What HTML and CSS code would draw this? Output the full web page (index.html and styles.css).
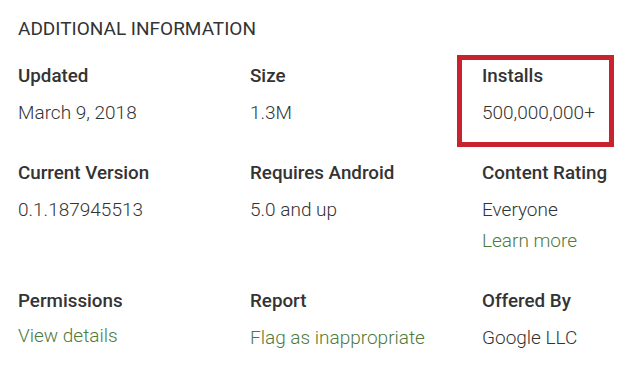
FILE: index.html
```html
<!DOCTYPE html>
<html>
<head>
<meta charset="utf-8">
<link rel="stylesheet" href="styles.css">
</head>
<body>
<div class="page">
  <h2 class="title">ADDITIONAL INFORMATION</h2>
  <div class="grid">
    <div class="cell">
      <div class="label">Updated</div>
      <div class="value">March 9, 2018</div>
    </div>
    <div class="cell">
      <div class="label">Size</div>
      <div class="value">1.3M</div>
    </div>
    <div class="cell">
      <div class="label">Installs</div>
      <div class="value">500,000,000+</div>
      <div class="marker"></div>
    </div>
    <div class="cell">
      <div class="label">Current Version</div>
      <div class="value">0.1.187945513</div>
    </div>
    <div class="cell">
      <div class="label">Requires Android</div>
      <div class="value">5.0 and up</div>
    </div>
    <div class="cell">
      <div class="label">Content Rating</div>
      <div class="value">Everyone</div>
      <div class="value link extra">Learn more</div>
    </div>
    <div class="cell">
      <div class="label">Permissions</div>
      <div class="value link raised">View details</div>
    </div>
    <div class="cell">
      <div class="label">Report</div>
      <div class="value link">Flag as inappropriate</div>
    </div>
    <div class="cell">
      <div class="label">Offered By</div>
      <div class="value">Google LLC</div>
    </div>
  </div>
</div>
</body>
</html>
```

FILE: styles.css
```css
* { box-sizing: border-box; }
html, body {
  margin: 0;
  padding: 0;
  background: #ffffff;
  overflow: hidden;
}
body {
  font-family: Roboto, "Liberation Sans", sans-serif;
  color: #333333;
}
.page {
  padding: 17px 0 0 18px;
}
.title {
  margin: 0 0 23px 0;
  font-size: 19px;
  line-height: 24px;
  font-weight: 400;
  color: #333333;
}
.grid {
  display: grid;
  grid-template-columns: 232px 232px 150px;
  row-gap: 36px;
}
.cell {
  position: relative;
}
.label {
  font-size: 18.8px;
  line-height: 24px;
  font-weight: 500;
  color: #333333;
  white-space: nowrap;
}
.value {
  margin-top: 13px;
  font-size: 19px;
  line-height: 24px;
  font-weight: 300;
  color: #333333;
  white-space: nowrap;
}
.link {
  color: #4e7a3a;
}
.value.extra {
  margin-top: 7px;
}
.value.raised {
  margin-top: 11px;
}
.marker {
  position: absolute;
  left: -25px;
  top: -9px;
  width: 157px;
  height: 92px;
  border: 5px solid #c8222e;
}
```
